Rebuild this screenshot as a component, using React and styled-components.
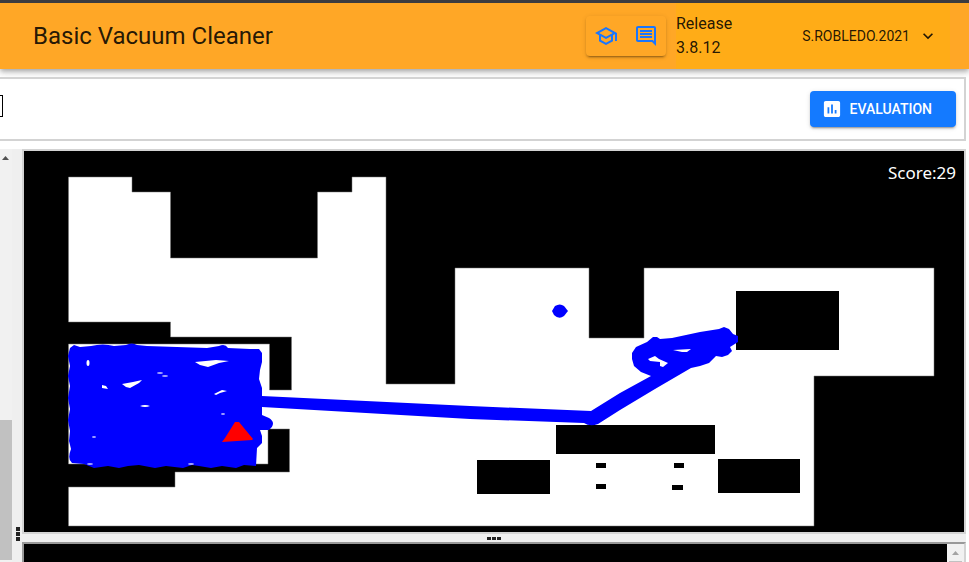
import React from "react";
import styled, { createGlobalStyle } from "styled-components";

const GlobalStyle = createGlobalStyle`
  * { box-sizing: border-box; }
  body { margin: 0; background: #fff; font-family: Roboto, sans-serif; color: rgba(0, 0, 0, 0.87); }
  button { font-family: inherit; cursor: pointer; }
`;

const Page = styled.div`
  display: flex;
  flex-direction: column;
  height: 100vh;
  overflow: hidden;
`;

const Header = styled.header`
  display: flex;
  align-items: center;
  flex: none;
  height: 69px;
  padding: 0 19px 0 33px;
  border-top: 3px solid #3c3c40;
  background: #ffa726;
  box-shadow: 0 2px 4px -1px rgba(0, 0, 0, 0.2), 0 4px 5px rgba(0, 0, 0, 0.14), 0 1px 10px rgba(0, 0, 0, 0.12);
`;

const Title = styled.h1`
  flex: 1;
  margin: 0;
  font-size: 24px;
  font-weight: 400;
  line-height: 32px;
`;

const IconGroup = styled.div`
  display: flex;
  margin-right: 10px;
  border-radius: 4px;
  box-shadow: 0 3px 1px -2px rgba(0, 0, 0, 0.2), 0 2px 2px rgba(0, 0, 0, 0.14), 0 1px 5px rgba(0, 0, 0, 0.12);
`;

const IconButton = styled.button`
  display: grid;
  place-items: center;
  width: 40px;
  height: 40px;
  padding: 0;
  border: 0;
  background: none;
  color: #1976ff;
`;

const Icon = styled.svg`
  display: block;
  width: ${(p) => p.$size}px;
  height: ${(p) => p.$size}px;
  fill: currentColor;
`;

const Account = styled.div`
  display: flex;
  align-items: center;
  justify-content: space-between;
  align-self: stretch;
  width: 274px;
  padding-right: 12px;
  background: #ffac17;
`;

const Release = styled.p`
  width: 64px;
  margin: 0;
  font-size: 16px;
  line-height: 24px;
`;

const UserButton = styled.button`
  display: flex;
  align-items: center;
  gap: 8px;
  padding: 0;
  border: 0;
  background: none;
  color: inherit;
  font-size: 14px;
  line-height: 24px;
`;

const Toolbar = styled.section`
  display: flex;
  align-items: center;
  justify-content: space-between;
  flex: none;
  margin: 8px 3px 8px 0;
  padding: 12px 8px 12px 0;
  border: 2px solid #d3d3d3;
  border-left: 0;
`;

const ClippedField = styled.span`
  width: 3px;
  height: 22px;
  margin-bottom: 6px;
  border: 1px solid #000;
  border-left: 0;
`;

const EvaluationButton = styled.button`
  display: flex;
  align-items: center;
  gap: 9px;
  height: 36px;
  padding: 0 24px 0 13px;
  border: 0;
  border-radius: 4px;
  background: #147aff;
  color: #fff;
  font-size: 14px;
  font-weight: 500;
  box-shadow: 0 3px 1px -2px rgba(0, 0, 0, 0.2), 0 2px 2px rgba(0, 0, 0, 0.14), 0 1px 5px rgba(0, 0, 0, 0.12);
`;

const Workspace = styled.main`
  display: flex;
  flex: 1;
  min-height: 0;
  margin-right: 3px;
  background: #efefef;
`;

const ScrollTrack = styled.div`
  display: flex;
  flex-direction: column;
  justify-content: space-between;
  width: 12px;
  padding: 7px 0 2px;
  background: #f1f1f1;
`;

const ScrollThumb = styled.div`
  height: 140px;
  background: #c1c1c1;
`;

const ScrollArrow = styled.svg`
  display: block;
  width: ${(p) => p.$width}px;
  height: 4px;
  margin-left: ${(p) => p.$inset}px;
  fill: ${(p) => p.$color};
`;

const Gutter = styled.div`
  display: flex;
  flex: none;
  align-items: center;
  justify-content: center;
  ${(p) => (p.$vertical ? "width: 10px; padding: 356px 0 0 2px;" : "height: 8px;")}
`;

const Grip = styled.div`
  display: flex;
  flex-direction: ${(p) => (p.$vertical ? "column" : "row")};
  gap: 1px;
`;

const GripDot = styled.i`
  width: 4px;
  height: ${(p) => (p.$vertical ? 4 : 3)}px;
  background: #222;
`;

const Panels = styled.div`
  display: flex;
  flex: 1;
  flex-direction: column;
  min-width: 0;
`;

const Simulation = styled.section`
  position: relative;
  flex: 1;
  min-height: 0;
  border: 2px solid #d3d3d3;
  background: #000;
`;

const Map = styled.svg`
  display: block;
  width: 100%;
  height: 100%;
`;

const Score = styled.output`
  position: absolute;
  top: 10px;
  right: 8px;
  color: #fff;
  font-family: "Noto Sans", sans-serif;
  font-size: 17px;
  line-height: 24px;
`;

const Console = styled.section`
  display: flex;
  justify-content: flex-end;
  flex: none;
  height: 20px;
  border: 2px solid #999;
  border-right-color: #d3d3d3;
  border-bottom: 0;
  background: #000;
`;

const ConsoleScroll = styled.div`
  display: flex;
  flex-direction: column;
  justify-content: space-between;
  width: 17px;
  padding: 7px 2px 0;
  background: #f1f1f1;
`;

const ConsoleThumb = styled.div`
  height: 1px;
  background: #c1c1c1;
`;

function Dots({ vertical }) {
  return (
    <Grip $vertical={vertical}>
      <GripDot $vertical={vertical} />
      <GripDot $vertical={vertical} />
      <GripDot $vertical={vertical} />
    </Grip>
  );
}

const obstacles = [
  [736, 291, 103, 59],
  [556, 425, 159, 29],
  [477, 460, 73, 34],
  [718, 459, 82, 34],
  [596, 463, 10, 5],
  [674, 463, 10, 5],
  [596, 484, 10, 5],
  [672, 485, 11, 5],
];

function HouseMap() {
  return (
    <Map viewBox="24 151 940 381" preserveAspectRatio="none" role="img" aria-label="House map">
      <path
        fill="#fff"
        stroke="#777"
        strokeWidth="0.5"
        d="M68.5 177H132V192H170.500V258H317.500V192H352V177H386V384H455V268H589V338H644V268H934V376H814V526H68.500V487H175V472H289.500V429H268V464H68.500V344H269.500V390H291.500V337H170.500V322H68.500Z"
      />
      {obstacles.map(([x, y, w, h]) => (
        <rect key={`${x}-${y}`} x={x} y={y} width={w} height={h} />
      ))}
      <g fill="#00f" stroke="none">
        <path d="M70 348L74 345L80 347L91 346Q103 343 114 346L126 345Q132 342 137 345L147 346L207 348L219 346Q225 343 228 348L250 349L259 349L262 353V362L260 370L259 379L262 388V396L470 406L591 411L620 393L651 376L641 372L634 366L632 359V353L636 347L647 342L653 337L657 337L660 339L672 338L700 332L719 329L724 327L729 329L733 334L738 336V342L730 347L732 351L728 355L722 357L716 356L709 363L700 366L691 368L655 389L620 410L598 424Q590 427 584 423L470 419L262 407V415L269 418Q277 423 269 430L260 430L262 436V443L257 448L256 466L244 465L236 468L222 466L211 468L199 466L192 465L183 468L166 466L155 468L139 465L128 466L119 468L108 466L94 468L84 464L72 463Q67 459 71 449L69 441L70 431L68 420L70 409L68 398L70 386L68 376L70 366L68 356Z" />
        <path d="M552 311L555 306Q560 303 564 306L568 311L564 316Q559 320 554 315Z" />
      </g>
      <g fill="#fff">
        <path d="M195 362L216 360L229 361L219 363L208 367L200 365Z" />
        <path d="M122 384L133 382L142 380L139 383L130 388L126 387Z" />
        <path d="M140 406Q145 404 150 406Q145 408 140 406Z" />
        <path d="M214 394L222 390L227 391L220 393L216 395Z" />
        <path d="M102 385L106 386L108 389L102 388Z" />
        <ellipse cx="88" cy="363" rx="1.500" ry="3" />
        <path d="M648 359L655 356L659 359L668 363L663 367L660 366L660 362L650 361Z" />
        <path d="M673 350L691 349L687 352L682 352Z" />
      </g>
      <g fill="#a7a7ff">
        <ellipse cx="160" cy="373" rx="3" ry="1" />
        <ellipse cx="165" cy="376" rx="3" ry="1" />
        <ellipse cx="223" cy="414" rx="2" ry="1" />
        <ellipse cx="94" cy="437" rx="2" ry="1" />
        <ellipse cx="90" cy="464" rx="3" ry="1" />
        <ellipse cx="191" cy="464" rx="3" ry="1" />
      </g>
      <path fill="#f00" d="M235 422L239 422L253 439L252 440L222 442L225 438Z" />
    </Map>
  );
}

export default function App() {
  return (
    <Page>
      <GlobalStyle />
      <Header>
        <Title>Basic Vacuum Cleaner</Title>
        <IconGroup>
          <IconButton aria-label="Theory">
            <Icon $size={24} viewBox="0 0 24 24">
              <path d="M12 3 1 9l4 2.180v6L12 21l7-3.820v-6l2-1.090V17h2V9L12 3zm6.820 6L12 12.720 5.180 9 12 5.280 18.820 9zM17 15.990l-5 2.730-5-2.730v-3.720L12 15l5-2.730v3.720z" />
            </Icon>
          </IconButton>
          <IconButton aria-label="Forum">
            <Icon $size={24} viewBox="0 0 24 24">
              <path d="M21.990 4c0-1.100-.890-2-1.990-2H4c-1.100 0-2 .900-2 2v12c0 1.100.900 2 2 2h14l4 4-.010-18zM20 4v13.170L18.830 16H4V4h16zM6 12h12v2H6zm0-3h12v2H6zm0-3h12v2H6z" />
            </Icon>
          </IconButton>
        </IconGroup>
        <Account>
          <Release>Release 3.8.12</Release>
          <UserButton>
            S.ROBLEDO.2021
            <Icon $size={20} viewBox="0 0 24 24">
              <path d="M7.410 8.590 12 13.170l4.590-4.580L18 10l-6 6-6-6z" />
            </Icon>
          </UserButton>
        </Account>
      </Header>
      <Toolbar>
        <ClippedField />
        <EvaluationButton>
          <Icon $size={18} viewBox="2 2 20 20">
            <path d="M19 3H5c-1.100 0-2 .900-2 2v14c0 1.100.900 2 2 2h14c1.100 0 2-.900 2-2V5c0-1.100-.900-2-2-2zM9 17H7v-7h2v7zm4 0h-2V7h2v10zm4 0h-2v-4h2v4z" />
          </Icon>
          EVALUATION
        </EvaluationButton>
      </Toolbar>
      <Workspace>
        <ScrollTrack>
          <ScrollArrow $width={7} $inset={2} $color="#505050" viewBox="0 0 7 4">
            <path d="M0 4 3.500 0 7 4z" />
          </ScrollArrow>
          <ScrollThumb />
        </ScrollTrack>
        <Gutter $vertical>
          <Dots vertical />
        </Gutter>
        <Panels>
          <Simulation>
            <HouseMap />
            <Score>Score:29</Score>
          </Simulation>
          <Gutter>
            <Dots />
          </Gutter>
          <Console>
            <ConsoleScroll>
              <ScrollArrow $width={7} $inset={3} $color="#a3a3a3" viewBox="0 0 7 4">
                <path d="M0 4 3.500 0 7 4z" />
              </ScrollArrow>
              <ConsoleThumb />
            </ConsoleScroll>
          </Console>
        </Panels>
      </Workspace>
    </Page>
  );
}
